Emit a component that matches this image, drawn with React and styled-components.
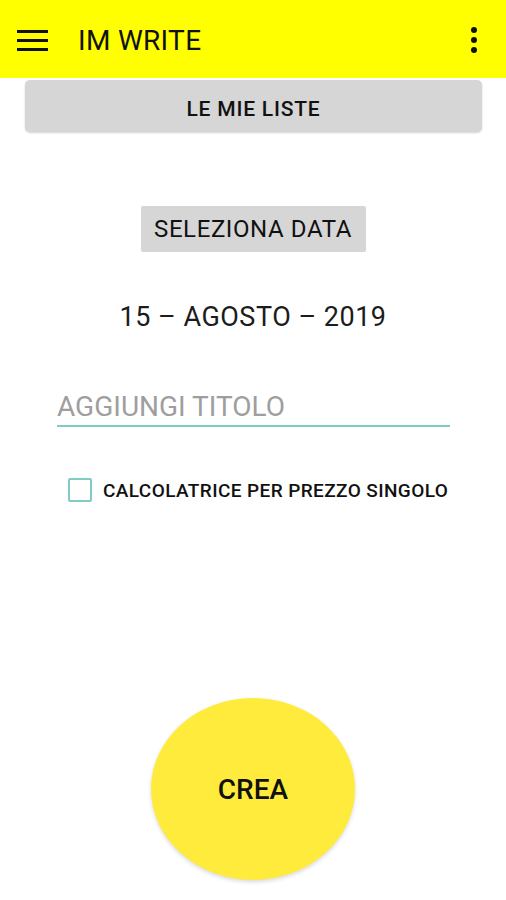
import styled, { createGlobalStyle } from "styled-components"

const Global = createGlobalStyle`
  body {
    margin: 0;
    background: #ffffff;
    font-family: Roboto, "Liberation Sans", sans-serif;
    color: #1c1c1c;
  }
`

const Screen = styled.div`
  width: 506px;
  height: 900px;
  display: flex;
  flex-direction: column;
  align-items: center;
  overflow: hidden;
`

const Toolbar = styled.header`
  align-self: stretch;
  height: 78px;
  background: #ffff00;
  display: flex;
  align-items: center;
  padding: 2px 29px 0 17px;
  box-sizing: border-box;
`

const Title = styled.h1`
  flex: 1;
  margin: 0 0 0 30px;
  font-size: 28px;
  font-weight: 400;
  color: #111;
  letter-spacing: 0.3px;
`

const Burger = styled.div`
  width: 31px;
  height: 21px;
  display: flex;
  flex-direction: column;
  justify-content: space-between;
  span {
    height: 3px;
    background: #111;
  }
`

const Kebab = styled.div`
  display: flex;
  flex-direction: column;
  gap: 4px;
  span {
    width: 6px;
    height: 6px;
    border-radius: 50%;
    background: #111;
  }
`

const GreyButton = styled.button`
  border: none;
  background: #d6d6d6;
  font-family: inherit;
  color: #111;
  padding: 0;
  cursor: pointer;
`

const ListsButton = styled(GreyButton)`
  align-self: stretch;
  margin: 2px 24px 0 25px;
  height: 52px;
  padding-top: 5px;
  border-radius: 5px;
  font-size: 21px;
  font-weight: 500;
  letter-spacing: 0.8px;
  box-shadow: 0 1px 2px rgba(0, 0, 0, 0.18);
`

const DateButton = styled(GreyButton)`
  margin-top: 74px;
  width: 225px;
  height: 46px;
  border-radius: 2px;
  font-size: 24px;
  letter-spacing: 0.6px;
`

const DateText = styled.div`
  margin-top: 50px;
  font-size: 27px;
  line-height: 30px;
  letter-spacing: 0.5px;
`

const TitleField = styled.div`
  align-self: flex-start;
  margin: 55px 0 0 57px;
  width: 393px;
  height: 38px;
  border-bottom: 2px solid #80cbc4;
  font-size: 28px;
  color: #9e9e9e;
  display: flex;
  align-items: center;
`

const CheckRow = styled.label`
  align-self: flex-start;
  margin: 51px 0 0 68px;
  display: flex;
  align-items: center;
  gap: 11px;
  font-size: 19px;
  font-weight: 500;
  letter-spacing: 0.4px;
  color: #111;
`

const Box = styled.span`
  width: 20px;
  height: 20px;
  border: 2px solid #80cbc4;
  border-radius: 2px;
`

const CreateButton = styled.button`
  margin-top: 196px;
  width: 204px;
  height: 182px;
  border: none;
  border-radius: 50%;
  background: #ffeb3b;
  font-family: inherit;
  font-size: 28px;
  font-weight: 500;
  color: #111;
  box-shadow: 0 2px 4px rgba(0, 0, 0, 0.15);
`

export default function App() {
  return (
    <>
      <Global />
      <Screen>
        <Toolbar>
          <Burger><span /><span /><span /></Burger>
          <Title>IM WRITE</Title>
          <Kebab><span /><span /><span /></Kebab>
        </Toolbar>
        <ListsButton>LE MIE LISTE</ListsButton>
        <DateButton>SELEZIONA DATA</DateButton>
        <DateText>15 – AGOSTO – 2019</DateText>
        <TitleField>AGGIUNGI TITOLO</TitleField>
        <CheckRow><Box />CALCOLATRICE PER PREZZO SINGOLO</CheckRow>
        <CreateButton>CREA</CreateButton>
      </Screen>
    </>
  )
}
